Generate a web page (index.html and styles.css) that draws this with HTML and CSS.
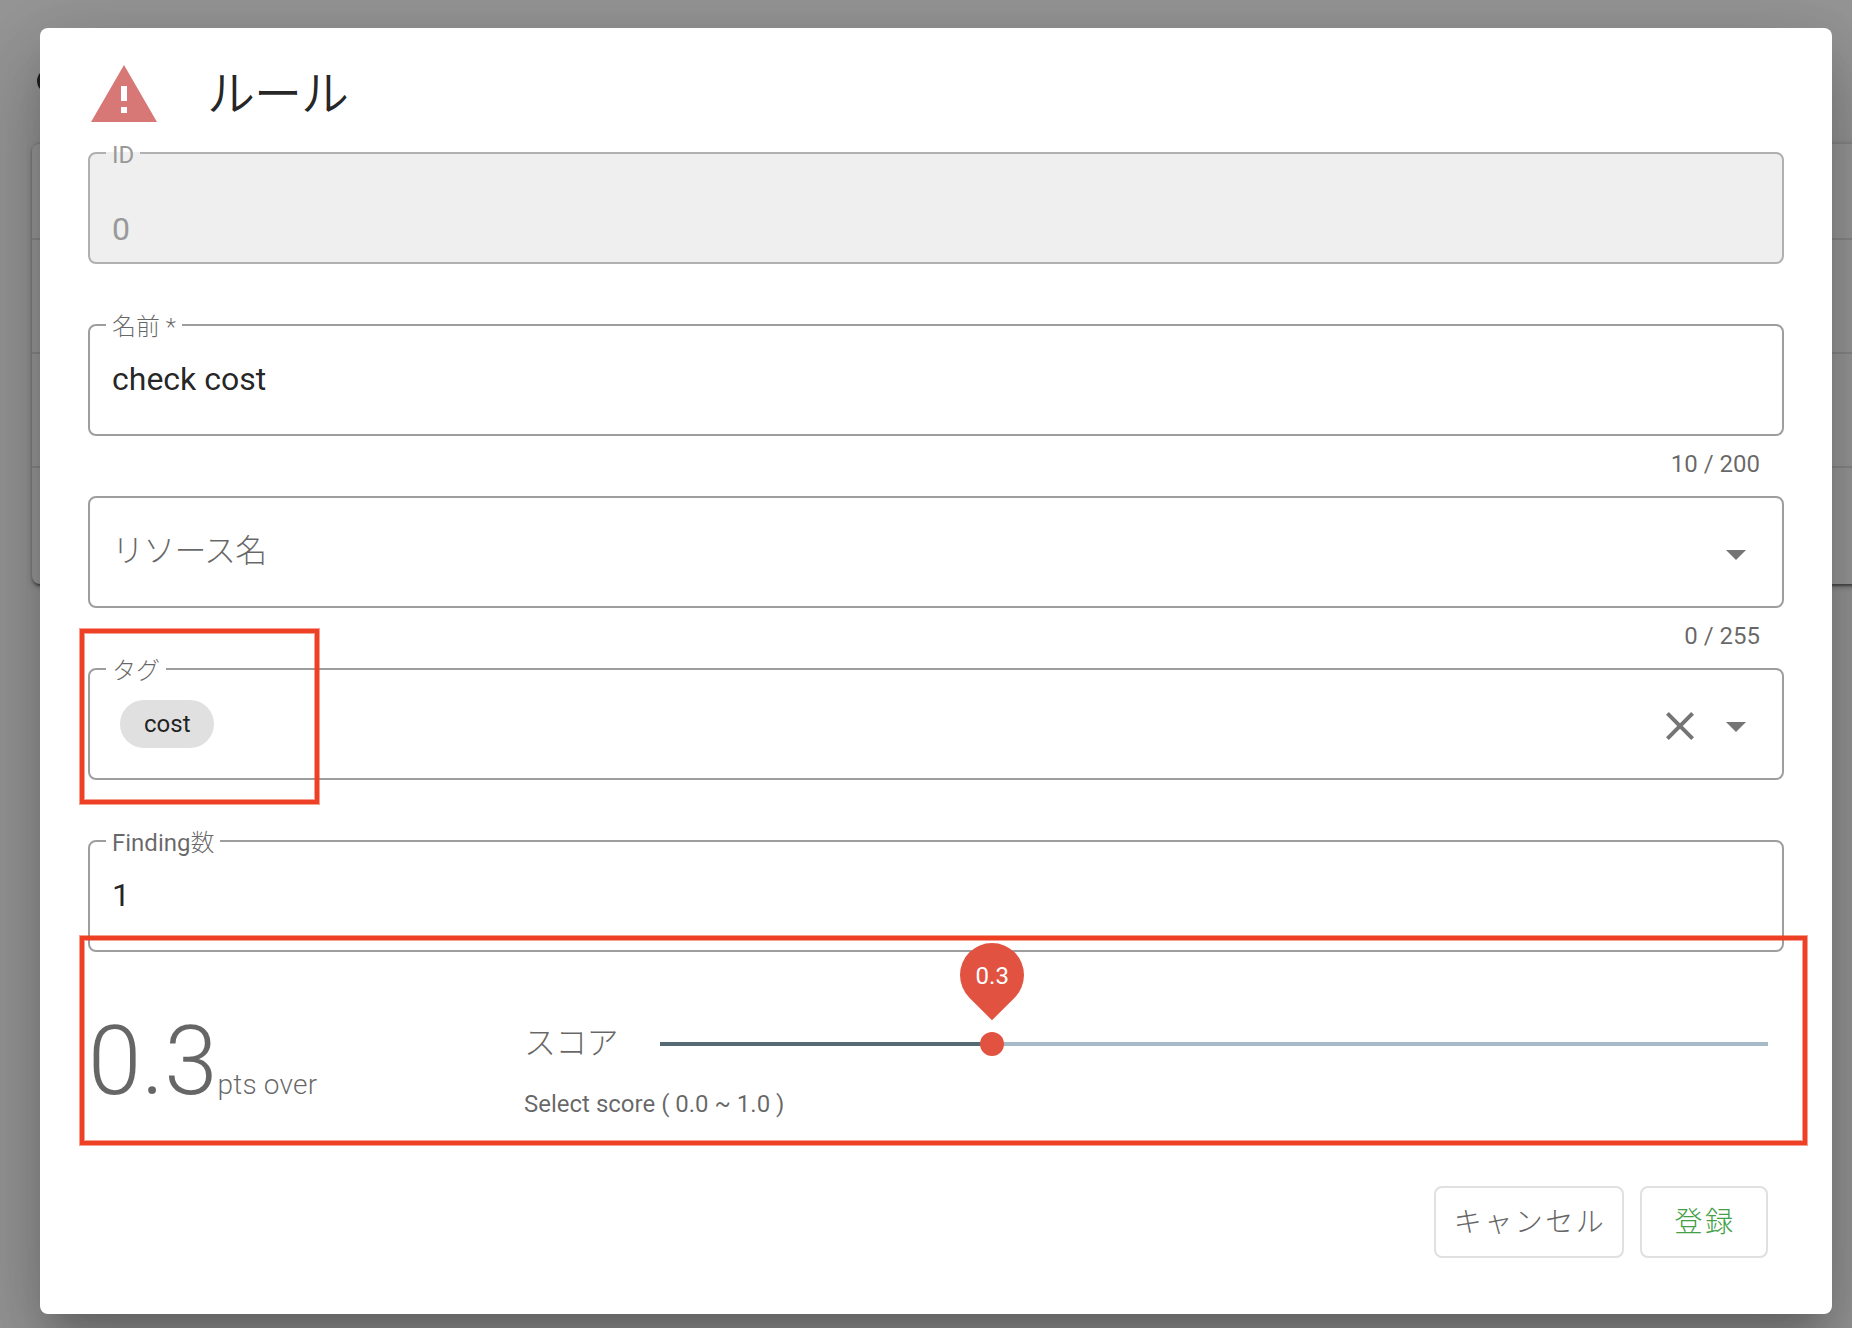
FILE: index.html
```html
<!DOCTYPE html>
<html lang="ja">
<head>
<meta charset="utf-8">
<title>ルール</title>
<link rel="stylesheet" href="styles.css">
</head>
<body>
<div class="page">
  <div class="page-dot"></div>
  <div class="page-table"><div class="row head"></div><div class="row"></div><div class="row"></div><div class="row last"></div></div>
</div>
<div class="overlay"></div>
<main class="dialog">
  <header class="dialog-head">
    <svg class="alert" viewBox="0 0 24 24"><path d="M13 14h-2V9h2m0 9h-2v-2h2M1 21h22L12 2 1 21z"/></svg>
    <h1>ルール</h1>
  </header>
  <section class="field disabled">
    <div class="outline"><label class="legend"><span>ID</span></label><div class="value">0</div></div>
  </section>
  <section class="field">
    <div class="outline"><label class="legend name"><span>名前 *</span></label><div class="value">check cost</div></div>
    <div class="counter">10 / 200</div>
  </section>
  <section class="field">
    <div class="outline"><div class="value placeholder">リソース名</div>
      <svg class="icon" viewBox="0 0 24 24"><path d="M7 10l5 5 5-5z"/></svg></div>
    <div class="counter">0 / 255</div>
  </section>
  <section class="field">
    <div class="outline"><label class="legend tag"><span>タグ</span></label><div class="value chips"><span class="chip">cost</span></div>
      <svg class="icon" viewBox="0 0 24 24"><path d="M19 6.41L17.59 5 12 10.59 6.41 5 5 6.41 10.59 12 5 17.59 6.41 19 12 13.41 17.59 19 19 17.59 13.41 12z"/></svg>
      <svg class="icon" viewBox="0 0 24 24"><path d="M7 10l5 5 5-5z"/></svg></div>
    <div class="mark mark-tag"></div>
  </section>
  <section class="field">
    <div class="outline"><label class="legend finding"><span>Finding<b>数</b></span></label><div class="value">1</div></div>
  </section>
  <section class="score">
    <div class="points"><span class="num">0.3</span><span class="unit">pts over</span></div>
    <div class="slider-col">
      <div class="slider-row">
        <label>スコア</label>
        <div class="track"><div class="fill" style="width:30%"></div><div class="thumb" style="left:30%"><div class="pin"><span>0.3</span></div></div></div>
      </div>
      <div class="hint">Select score ( 0.0 ~ 1.0 )</div>
    </div>
    <div class="mark mark-score"></div>
  </section>
  <footer class="actions">
    <button class="btn cancel">キャンセル</button>
    <button class="btn submit">登録</button>
  </footer>
</main>
</body>
</html>
```
FILE: styles.css
```css
* { box-sizing: border-box; }
body { margin: 0; width: 1852px; height: 1328px; overflow: hidden; position: relative; background: #fafafa; font-family: Roboto, "Noto Sans CJK JP", sans-serif; color: rgba(0,0,0,.87); }

/* page behind the dialog */
.page { padding: 69px 0 0 32px; height: 1328px; }
.page-dot { width: 24px; height: 24px; margin: 0 0 49px 5px; border-radius: 50%; border: 3px solid #222; }
.page-table { width: 1900px; height: 442px; border-radius: 8px; background: #fff; box-shadow: 0 6px 2px -4px rgba(0,0,0,.2), 0 4px 4px rgba(0,0,0,.14), 0 2px 10px rgba(0,0,0,.12), 0 2px 2px rgba(0,0,0,.3); }
.row { height: 114px; border-bottom: 2px solid rgba(0,0,0,.12); }
.row.head { height: 98px; border-top: 2px solid rgba(0,0,0,.12); border-radius: 8px 0 0; }
.row.last { border: 0; }
.overlay { position: absolute; inset: 0; background: rgba(33,33,33,.46); }

.dialog { position: absolute; left: 40px; top: 28px; width: 1792px; height: 1286px; padding: 31px 48px 56px; border-radius: 8px; background: #fff; display: flex; flex-direction: column; box-shadow: 0 22px 30px -14px rgba(0,0,0,.2), 0 48px 76px 6px rgba(0,0,0,.14), 0 18px 92px 16px rgba(0,0,0,.12); }
.dialog-head { display: flex; height: 93px; }
.alert { width: 72px; height: 72px; fill: #d77876; }
h1 { margin: 4px 0 0 47px; font-size: 48px; font-weight: 350; line-height: 64px; letter-spacing: -1px; }

.field { position: relative; height: 172px; flex: none; }
.outline { position: relative; height: 112px; border: 2px solid #9e9e9e; border-radius: 8px; display: flex; align-items: flex-start; gap: 8px; padding: 32px 22px 0; }
.legend { position: absolute; top: -2px; left: 16px; width: 34px; height: 2px; background: #fff; font-size: 24px; color: rgba(0,0,0,.6); white-space: nowrap; }
.legend span { position: absolute; left: 6px; top: -17px; line-height: 40px; }
.legend b { font-weight: 300; }
.legend.name { width: 76px; font-weight: 300; }
.legend.tag { width: 60px; font-weight: 300; }
.legend.finding { width: 114px; }
.value { flex: 1; margin-top: 1px; font-size: 32px; line-height: 40px; }
.placeholder { color: rgba(0,0,0,.6); letter-spacing: -.8px; font-weight: 300; }
.disabled .outline { background: #efefef; border-color: #b0b0b0; padding-top: 54px; }
.disabled .legend { background: #efefef; color: #999; }
.disabled .value { color: #999; }
.icon { width: 48px; height: 48px; fill: #757575; }
.chips { margin: -2px 0 0 8px; height: 48px; }
.chip { display: inline-block; height: 48px; border-radius: 24px; padding: 0 23px 0 24px; background: #e0e0e0; font-size: 24px; line-height: 48px; vertical-align: top; }
.counter { padding: 16px 24px 0; text-align: right; font-size: 24px; line-height: 24px; color: rgba(0,0,0,.6); }

.score { position: relative; height: 174px; display: flex; color: rgba(0,0,0,.6); }
.points { width: 436px; padding-top: 1px; font-weight: 300; white-space: nowrap; }
.num { font-size: 96px; line-height: 96px; }
.unit { font-size: 28px; letter-spacing: .2px; }
.slider-col { flex: 1; }
.slider-row { height: 64px; display: flex; align-items: center; }
.slider-row label { width: 136px; margin-top: -9px; font-size: 32px; font-weight: 300; letter-spacing: -.8px; }
.track { position: relative; width: 1108px; height: 4px; background: #a6bac8; }
.fill { height: 4px; background: #566a74; }
.thumb { position: absolute; top: -10px; width: 24px; height: 24px; margin-left: -12px; border-radius: 50%; background: #e15241; }
.pin { position: absolute; left: -20px; top: -89px; width: 64px; height: 64px; border-radius: 50% 50% 0; background: #e15241; transform: rotate(45deg); display: grid; place-items: center; }
.pin span { transform: rotate(-45deg) translate(.5px, 1px); color: #fff; font-size: 24px; }
.hint { margin-top: 14px; font-size: 24px; line-height: 28px; }

/* red highlight frames */
.mark { position: absolute; border: 4px solid #ed4024; box-shadow: 0 0 0 1px rgba(237,64,36,.5), inset 0 0 0 1px rgba(237,64,36,.5); }
.mark-tag { left: -8px; top: -39px; width: 239px; height: 175px; }
.mark-score { left: -8px; top: -76px; width: 1727px; height: 209px; }

.actions { display: flex; justify-content: flex-end; gap: 16px; padding-right: 16px; }
.btn { height: 72px; padding: 2px 0 0 2px; border: 2px solid #e0e0e0; border-radius: 8px; background: #fff; font: 300 28px/66px Roboto, "Noto Sans CJK JP", sans-serif; letter-spacing: 2.5px; white-space: nowrap; }
.cancel { width: 190px; color: #666; }
.submit { width: 128px; color: #43a047; }
```
